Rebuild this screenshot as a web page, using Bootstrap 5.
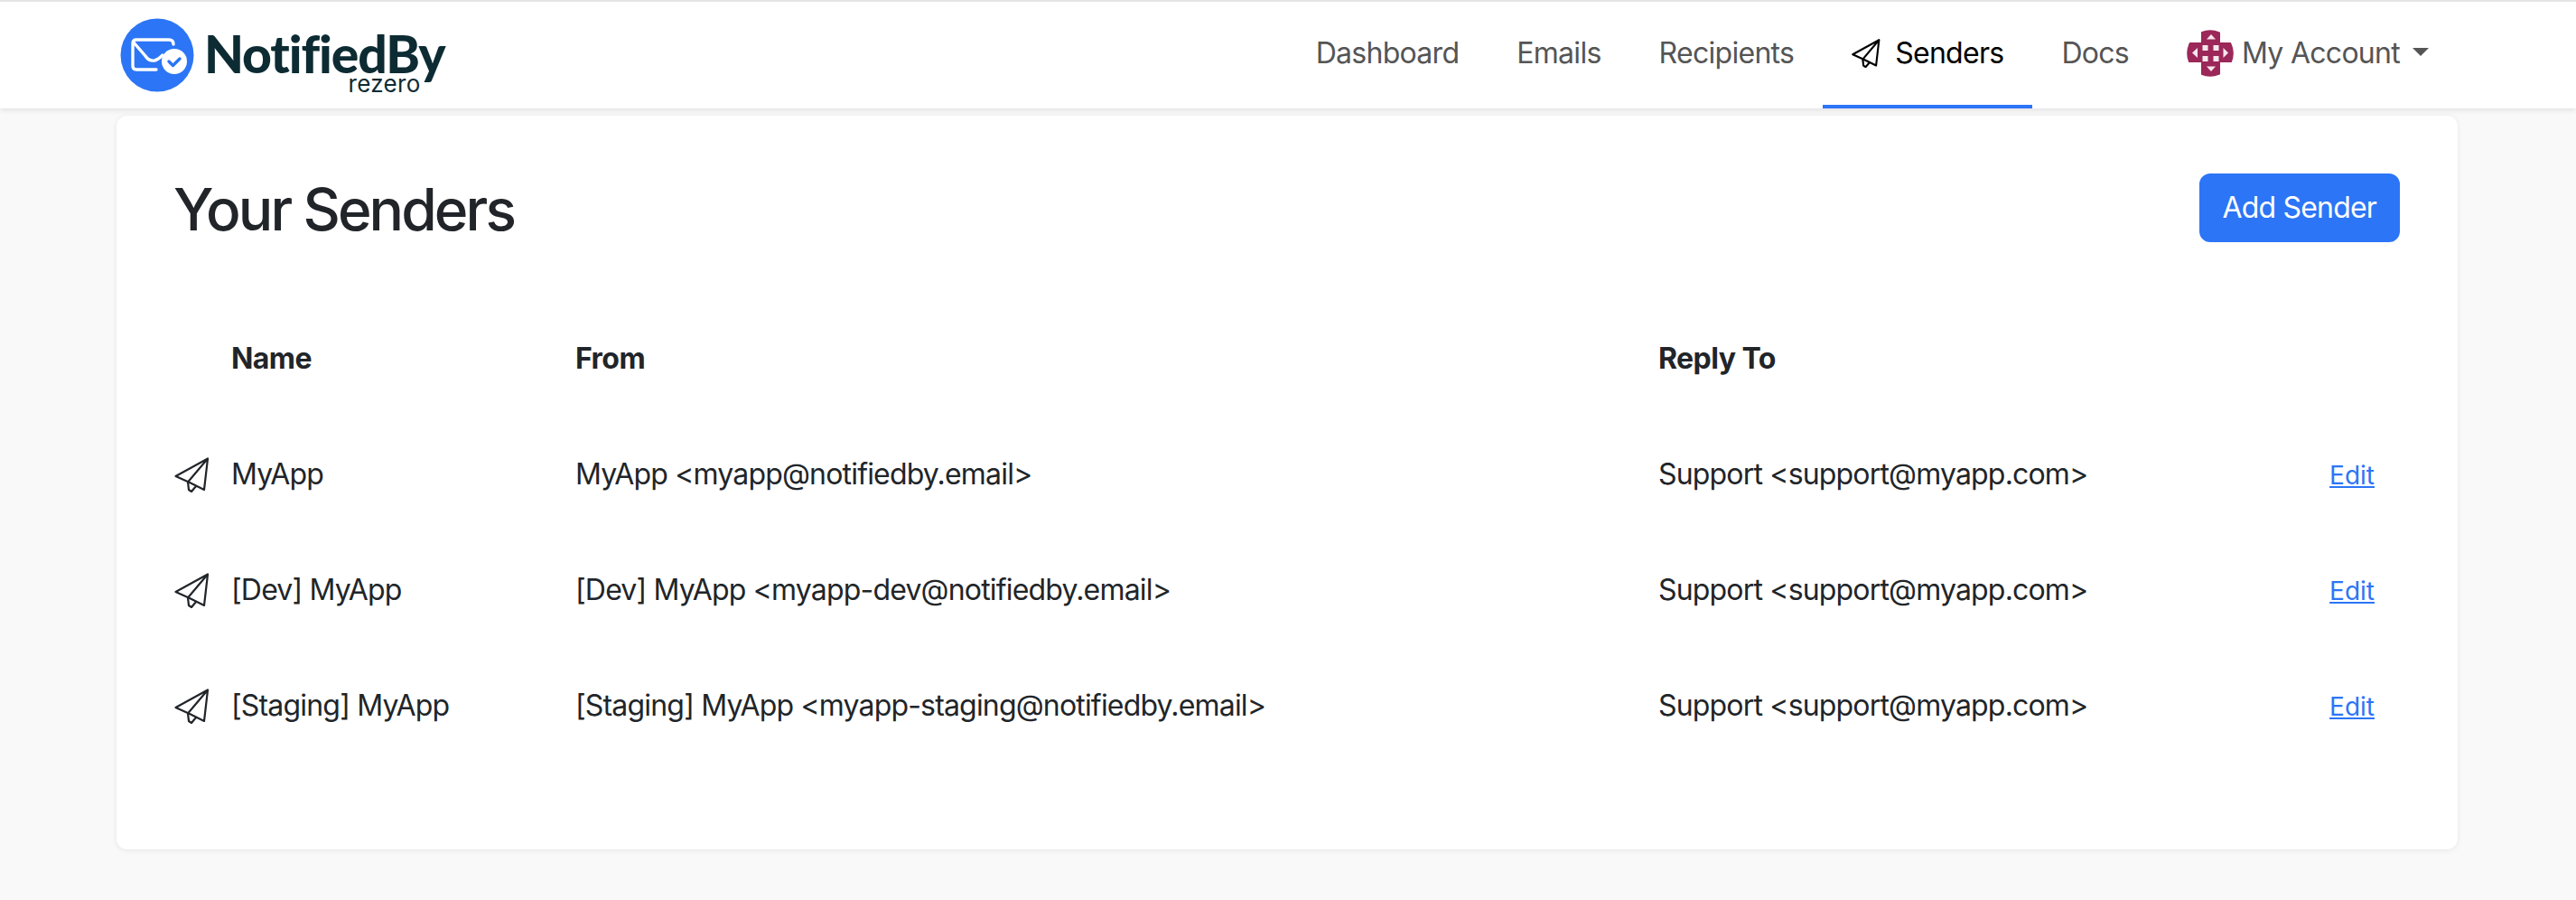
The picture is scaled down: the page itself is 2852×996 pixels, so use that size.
<!DOCTYPE html>
<html lang="en"><head><meta charset="utf-8"><title>Senders</title>
<link href="https://cdn.jsdelivr.net/npm/bootstrap@5.3.0/dist/css/bootstrap.min.css" rel="stylesheet">
<style>
html{font-size:32px}
body{font-family:Inter,"Liberation Sans",sans-serif;background:#f9f9f9;color:#212529;min-height:996px;letter-spacing:-.82px}
.top-bar{height:120px;background:#fff;border-top:2px solid #e4e4e4;box-shadow:0 2px 6px rgba(0,0,0,.1);padding:0 131px 0 133px}
.brand-box{gap:11px;color:#0d2b33;text-decoration:none}
.brand-text{display:flex;flex-direction:column;align-items:flex-end;margin-top:15px}
.brand-name{font-family:Lato,Inter,sans-serif;font-weight:900;font-size:57px;line-height:50px;letter-spacing:-1.1px}
.brand-sub{font-size:26px;line-height:20px;font-weight:400;margin-right:27px;margin-top:-1px;letter-spacing:.3px}
.top-link{color:#555;padding:0 32px;height:118px;display:flex;align-items:center;gap:16px;text-decoration:none;border-bottom:4px solid transparent;letter-spacing:-.72px}
.top-link.on{color:#000;border-bottom-color:#2c75f6}
.top-link .dropdown-toggle::after{margin-left:14px}
.acct-label{margin-left:-7px}
.sheet{margin:8px 131px 0 129px;height:812px;background:#fff;border-radius:12px;box-shadow:0 1px 6px rgba(0,0,0,.08);padding:64px}
.sheet h1{font-size:64px;font-weight:500;line-height:70px;margin:0 0 0 -1px;padding-top:4px;letter-spacing:-2.9px}
.go-btn{--bs-btn-bg:#2c75f6;--bs-btn-border-color:#2c75f6;--bs-btn-border-width:2px;--bs-btn-border-radius:12px;letter-spacing:-.82px}
.send-table{table-layout:fixed;margin-top:65px;--bs-table-bg:transparent;white-space:nowrap}
.send-table td,.send-table th{padding:40px 0;height:128px;line-height:48px;border:0;vertical-align:middle;font-weight:400}
.send-table th{font-weight:700;letter-spacing:-.55px}
.c-icon{width:63px}.c-name{width:381px}.c-from{width:1199px}
.c-edit{text-align:right;padding-right:28px!important;width:150px}
.c-edit a{font-size:28px;line-height:1;color:#2c75f6;letter-spacing:0}
.plane{display:block}
</style></head><body>
<nav class="top-bar d-flex align-items-center justify-content-between">
<a class="brand-box d-flex align-items-center" href="#">
<svg width="82" height="82" viewBox="0 0 82 82"><circle cx="41" cy="41" r="40.500" fill="#2c75f6"/><path d="M14 28Q14 24 18 24H54Q59 24 59 29M14 28V53Q14 57 18 57H40M15 27L28 42Q32 48 38 47Q42 46 47 41" fill="none" stroke="#fff" stroke-width="3.400" stroke-linecap="round"/><circle cx="60" cy="48" r="14" fill="#fff"/><path d="M54 48L58.500 52.500L66 45" fill="none" stroke="#2c75f6" stroke-width="3.400" stroke-linecap="round" stroke-linejoin="round"/></svg>
<span class="brand-text"><span class="brand-name">NotifiedBy</span><span class="brand-sub">rezero</span></span>
</a>
<div class="d-flex align-items-center">
<a class="top-link" href="#">Dashboard</a><a class="top-link" href="#">Emails</a><a class="top-link" href="#">Recipients</a>
<a class="top-link on" href="#"><svg class="plane" width="32" height="32" viewBox="0 0 39 39"><path d="M1.500 21L37 1.500L33 36L17 28ZM37 1.500L15 27.500L16 36L19 38L24 32" fill="none" stroke="#000" stroke-width="2.600" stroke-linejoin="round"/></svg><span>Senders</span></a>
<a class="top-link" href="#">Docs</a>
<a class="top-link" href="#"><svg width="52" height="52" viewBox="4 5 52 52"><circle cx="30" cy="31" r="25.800" fill="#9b2859"/><path d="M0 0H20V19H0ZM41 0H60V19H41ZM0 41H20V60H0ZM41 41H60V60H41Z" fill="#fff"/><g fill="#f6e7ed"><rect x="21.500" y="22" width="6" height="6"/><rect x="33.500" y="22" width="6" height="6"/><rect x="21.500" y="34" width="6" height="6"/><rect x="33.500" y="34" width="6" height="6"/><path d="M31 10L26 15.500H36ZM31 51L26 45.500H36ZM10 30.500L16 25V36ZM50 30.500L44.500 25V36Z"/></g></svg><span class="dropdown-toggle acct-label">My Account</span></a>
</div>
</nav>
<main class="sheet">
<div class="d-flex justify-content-between align-items-center"><h1>Your Senders</h1><button class="btn btn-primary go-btn">Add Sender</button></div>
<table class="table table-borderless send-table">
<thead><tr><th class="c-icon"></th><th class="c-name">Name</th><th class="c-from">From</th><th>Reply To</th><th class="c-edit"></th></tr></thead>
<tbody>
<tr><td><svg class="plane" width="39" height="39" viewBox="0 0 39 39"><path d="M1.500 21L37 1.500L33 36L17 28ZM37 1.500L15 27.500L16 36L19 38L24 32" fill="none" stroke="#212529" stroke-width="2.200" stroke-linejoin="round"/></svg></td><td>MyApp</td><td>MyApp &lt;myapp@notifiedby.email&gt;</td><td>Support &lt;support@myapp.com&gt;</td><td class="c-edit"><a href="#">Edit</a></td></tr>
<tr><td><svg class="plane" width="39" height="39" viewBox="0 0 39 39"><path d="M1.500 21L37 1.500L33 36L17 28ZM37 1.500L15 27.500L16 36L19 38L24 32" fill="none" stroke="#212529" stroke-width="2.200" stroke-linejoin="round"/></svg></td><td>[Dev] MyApp</td><td>[Dev] MyApp &lt;myapp-dev@notifiedby.email&gt;</td><td>Support &lt;support@myapp.com&gt;</td><td class="c-edit"><a href="#">Edit</a></td></tr>
<tr><td><svg class="plane" width="39" height="39" viewBox="0 0 39 39"><path d="M1.500 21L37 1.500L33 36L17 28ZM37 1.500L15 27.500L16 36L19 38L24 32" fill="none" stroke="#212529" stroke-width="2.200" stroke-linejoin="round"/></svg></td><td>[Staging] MyApp</td><td>[Staging] MyApp &lt;myapp-staging@notifiedby.email&gt;</td><td>Support &lt;support@myapp.com&gt;</td><td class="c-edit"><a href="#">Edit</a></td></tr>
</tbody></table>
</main>
<script src="https://cdn.jsdelivr.net/npm/bootstrap@5.3.0/dist/js/bootstrap.bundle.min.js"></script>
</body></html>
